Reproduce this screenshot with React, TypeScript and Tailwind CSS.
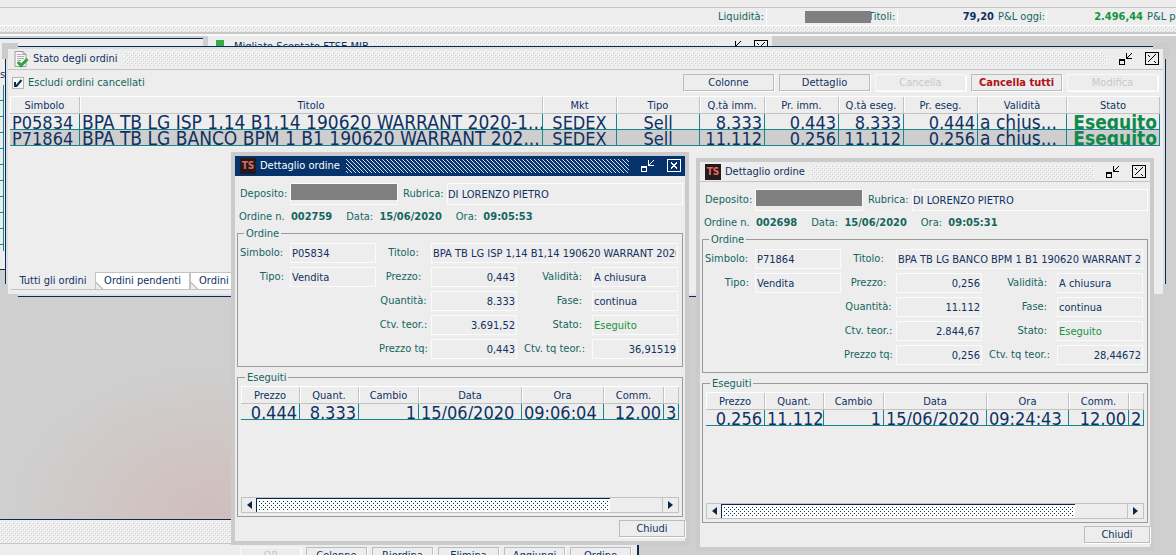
import React from "react";

const BUMPS =
  "[background-image:conic-gradient(at_1px_1px,transparent_75%,#ffffff_0),conic-gradient(at_1px_1px,transparent_75%,#ffffff_0),conic-gradient(at_1px_1px,transparent_75%,#cccccc_0),conic-gradient(at_1px_1px,transparent_75%,#cccccc_0)] [background-size:4px_4px] [background-position:0_0,2px_2px,1px_1px,3px_3px]";
const ACTIVE_BUMPS =
  "[background-image:conic-gradient(at_1px_1px,transparent_75%,#d4e2f0_0),conic-gradient(at_1px_1px,transparent_75%,#d4e2f0_0),conic-gradient(at_1px_1px,transparent_75%,#d4e2f0_0),conic-gradient(at_1px_1px,transparent_75%,#d4e2f0_0)] [background-size:4px_4px] [background-position:0_0,1px_1px,2px_2px,3px_3px]";
const THUMB_BUMPS =
  "[background-image:conic-gradient(at_1px_1px,transparent_75%,#12304f_0),conic-gradient(at_1px_1px,transparent_75%,#12304f_0)] [background-size:4px_4px] [background-position:1px_1px,3px_3px]";

function Bumps({ active = false }: { active?: boolean }) {
  return <div className={`h-3.5 min-w-0 flex-1 ${active ? ACTIVE_BUMPS : BUMPS}`} />;
}

function RestoreIcon() {
  return (
    <svg width="14" height="14" viewBox="0 0 14 14" shapeRendering="crispEdges" fill="none" stroke="currentColor">
      <path d="M0 7.5H6M5.5 8V13M0.5 8V13M0 12.5H6M1 8.5H5" />
      <path d="M7.500 1V6.500H13M8 5.500h1M9 4.500h1M10 3.500h1M11 2.500h1M12 1.500h1" />
    </svg>
  );
}

function CloseIcon({ active = false }: { active?: boolean }) {
  return (
    <svg width="14" height="14" viewBox="0 0 14 14" shapeRendering="crispEdges" fill="none" stroke="currentColor">
      <rect x="0.5" y="0.5" width="13" height="12" />
      {active ? (
        <path strokeWidth="2" d="M4 3.5l6 6M10 3.5l-6 6" />
      ) : (
        <path d="M3 9.5h1M4 8.5h1M5 7.5h1M6 6.5h1M7 5.5h1M8 4.5h1M9 3.5h1M10 2.5h1M3 3.5h1M4 4.5h1M9 9.5h1M10 10.500h1" />
      )}
    </svg>
  );
}

function WindowButtons({ active = false }: { active?: boolean }) {
  return (
    <div className={`flex items-center gap-3 pr-1 pl-2 ${active ? "text-white" : "text-black"}`}>
      <button type="button" aria-label="Riduci">
        <RestoreIcon />
      </button>
      <button type="button" aria-label="Chiudi finestra">
        <CloseIcon active={active} />
      </button>
    </div>
  );
}

function DocIcon() {
  return (
    <svg width="15" height="17" viewBox="0 0 15 17" fill="none">
      <path d="M1 0.5h8l3 3v12H1z" fill="#f7f7f7" stroke="#9a9a9a" />
      <path d="M9 0.5v3h3" stroke="#9a9a9a" />
      <path d="M3 3.5h5M3 5.5h7M3 7.5h7M3 9.5h4M3 11.5h3" stroke="#b0b0b0" />
      <path d="M4 11l3 3.5L13.5 8" stroke="#2fa43c" strokeWidth="3" />
    </svg>
  );
}

function PlainButton({ children, tone = "text-[#0f3163]", width = "w-[91px]" }: { children: string; tone?: string; width?: string }) {
  const faded = tone.includes("c8c8c8");
  return (
    <button
      type="button"
      disabled={faded}
      className={`h-[17px] shrink-0 border text-center leading-[15px] shadow-[1px_1px_0_#fff] ${faded ? "border-[#f8f8f8]" : "border-[#bcbcbc]"} ${tone} ${width}`}
    >
      {children}
    </button>
  );
}

const orderColumns: [string, string, string][] = [
  ["Simbolo", "w-[70px]", "text-[18px] text-left"],
  ["Titolo", "", "text-[19px] text-left"],
  ["Mkt", "w-[74px]", "text-[18px] text-center"],
  ["Tipo", "w-[83px]", "text-[18px] text-center"],
  ["Q.tà imm.", "w-[65px]", "text-[18px] text-right"],
  ["Pr. imm.", "w-[74px]", "text-[18px] text-right"],
  ["Q.tà eseg.", "w-[65px]", "text-[18px] text-right"],
  ["Pr. eseg.", "w-[74px]", "text-[18px] text-right"],
  ["Validità", "w-[89px]", "text-[19px] text-left"],
  ["Stato", "w-[93px]", "text-[19px] text-right font-bold text-[#108a4c]"],
];

const orderRows = [
  ["P05834", "BPA TB LG ISP 1,14 B1,14 190620 WARRANT 2020-1...", "SEDEX", "Sell", "8.333", "0,443", "8.333", "0,444", "a chius...", "Eseguito"],
  ["P71864", "BPA TB LG BANCO BPM 1 B1 190620 WARRANT 202...", "SEDEX", "Sell", "11.112", "0,256", "11.112", "0,256", "a chius...", "Eseguito"],
];

const fillColumns: [string, string, string][] = [
  ["Prezzo", "w-[59px]", "text-[18px] text-right"],
  ["Quant.", "w-[59px]", "text-[18px] text-right"],
  ["Cambio", "w-[60px]", "text-[18px] text-right"],
  ["Data", "w-[103px]", "text-[18px] text-left"],
  ["Ora", "w-[82px]", "text-[18px] text-left"],
  ["Comm.", "w-[60px]", "text-[18px] text-right"],
  ["", "", "text-[18px] text-left"],
];

function DataTable({ columns, rows }: { columns: [string, string, string][]; rows: string[][] }) {
  return (
    <table className="w-full table-fixed border-separate border-spacing-0 border-t border-white">
      <thead>
        <tr>
          {columns.map(([name, width], i) => (
            <th key={i} className={`h-[17px] border-r border-b border-[#c2c2c2] px-0 pt-0.5 pb-0 font-normal leading-[14px] shadow-[inset_1px_0_0_#fff] ${width}`}>
              {name}
            </th>
          ))}
        </tr>
      </thead>
      <tbody>
        {rows.map((row, r) => (
          <tr key={r} className={r === 1 ? "bg-[#cecece]" : ""}>
            {row.map((cell, c) => (
              <td key={c} className="border-r border-b border-[#17858c] p-0">
                <div className={`h-[15px] overflow-hidden px-0.5 leading-[17px] whitespace-nowrap ${columns[c][2]}`}>{cell}</div>
              </td>
            ))}
          </tr>
        ))}
      </tbody>
    </table>
  );
}

function Field({ id, value, align = "text-left", tone = "text-[#0f3163]" }: { id: string; value: string; align?: string; tone?: string }) {
  return (
    <input
      id={id}
      readOnly
      value={value}
      className={`h-5 w-full min-w-0 border border-[#fbfbfb] bg-transparent px-px outline-none ${align} ${tone}`}
    />
  );
}

interface Order {
  id: string;
  number: string;
  time: string;
  symbol: string;
  title: string;
  price: string;
  qty: string;
  amount: string;
  tq: string;
  fill: string[];
}

function Label({ htmlFor, children, className = "text-center" }: { htmlFor: string; children: string; className?: string }) {
  return (
    <label htmlFor={htmlFor} className={`whitespace-nowrap ${className}`}>
      {children}
    </label>
  );
}

function DetailWindow({ order, active = false, place }: { order: Order; active?: boolean; place: string }) {
  const k = order.id;
  return (
    <section className={`absolute w-[458px] border-4 border-[#cbcbcb] bg-[#ededed] ${place}`}>
      <header className={`flex h-5 items-center gap-1 pl-[5px] ${active ? "bg-[#06336b] text-white" : "border-b border-[#c4c4c4]"}`}>
        <span className="flex size-4 items-center justify-center overflow-hidden bg-[#241a1c] text-[10px] leading-none font-bold text-[#e06a64]">TS</span>
        <h2 className="mr-0.5">Dettaglio ordine</h2>
        <Bumps active={active} />
        <WindowButtons active={active} />
      </header>
      <div className="flex flex-col px-0.5 text-[#14665f]">
        <div className="mt-[7px] flex h-[22px] items-center pl-[3px]">
          <span className="w-[50px] whitespace-nowrap">Deposito:</span>
          <span className="h-[22px] w-[108px] border border-[#fbfbfb] bg-[#808080] bg-clip-content pb-1" />
          <Label htmlFor={`${k}-rubrica`} className="ml-[5px] w-[44px]">
            Rubrica:
          </Label>
          <input
            id={`${k}-rubrica`}
            readOnly
            value="DI LORENZO PIETRO"
            className="h-[22px] min-w-0 flex-1 border border-[#fbfbfb] bg-transparent text-[#0f3163] outline-none"
          />
        </div>
        <div className="mt-[5px] flex h-3.5 items-center gap-3.5 pl-0.5 whitespace-nowrap">
          <span>
            Ordine n.&nbsp; <b>{order.number}</b>
          </span>
          <span>
            Data:&nbsp; <b>15/06/2020</b>
          </span>
          <span>
            Ora:&nbsp; <b>{order.time}</b>
          </span>
        </div>
        <fieldset className="mt-[3px] min-w-0 border border-[#9a9a9a] px-0.5 pt-[3px] pb-[7px]">
          <legend className="ml-1 px-0.5 leading-[13px]">Ordine</legend>
          <div className="grid grid-cols-[50px_86px_55px_86px_75px_86px] items-center gap-y-1">
            <Label htmlFor={`${k}-simbolo`} className="text-left">
              Simbolo:
            </Label>
            <Field id={`${k}-simbolo`} value={order.symbol} />
            <Label htmlFor={`${k}-titolo`}>Titolo:</Label>
            <div className="col-span-3">
              <Field id={`${k}-titolo`} value={order.title} />
            </div>

            <Label htmlFor={`${k}-tipo`} className="pr-1.5 text-right">
              Tipo:
            </Label>
            <Field id={`${k}-tipo`} value="Vendita" />
            <Label htmlFor={`${k}-prezzo`}>Prezzo:</Label>
            <Field id={`${k}-prezzo`} value={order.price} align="text-right" />
            <Label htmlFor={`${k}-validita`} className="pr-2.5 text-right">
              Validità:
            </Label>
            <Field id={`${k}-validita`} value="A chiusura" />

            <Label htmlFor={`${k}-quantita`} className="col-start-3 text-center">
              Quantità:
            </Label>
            <Field id={`${k}-quantita`} value={order.qty} align="text-right" />
            <Label htmlFor={`${k}-fase`} className="pr-2.5 text-right">
              Fase:
            </Label>
            <Field id={`${k}-fase`} value="continua" />

            <Label htmlFor={`${k}-ctv`} className="col-start-3 text-center">
              Ctv. teor.:
            </Label>
            <Field id={`${k}-ctv`} value={order.amount} align="text-right" />
            <Label htmlFor={`${k}-stato`} className="pr-2.5 text-right">
              Stato:
            </Label>
            <Field id={`${k}-stato`} value="Eseguito" tone="text-[#17933f]" />

            <Label htmlFor={`${k}-ptq`} className="col-start-3 text-center">
              Prezzo tq:
            </Label>
            <Field id={`${k}-ptq`} value={order.price} align="text-right" />
            <Label htmlFor={`${k}-tq`}>Ctv. tq teor.:</Label>
            <Field id={`${k}-tq`} value={order.tq} align="text-right" />
          </div>
        </fieldset>
        <fieldset className="mt-1 min-w-0 border border-[#9a9a9a] px-[3px] pt-0.5 pb-[3px]">
          <legend className="ml-1 px-0.5 leading-[13px]">Eseguiti</legend>
          <div className="h-[111px] text-[#0f3163]">
            <DataTable columns={fillColumns} rows={[order.fill]} />
          </div>
          <div className="flex h-4 border border-[#c2c2c2] text-[#0b2748]">
            <button type="button" aria-label="Scorri a sinistra" className="flex w-3.5 items-center justify-center">
              <svg width="5" height="8" viewBox="0 0 5 8">
                <path d="M5 0v8L0 4z" fill="currentColor" />
              </svg>
            </button>
            <div className="flex min-w-0 flex-1 pr-[52px]">
              <div className="flex-1 border-t border-l border-[#0b2748] bg-white p-px">
                <div className={`h-full ${THUMB_BUMPS}`} />
              </div>
            </div>
            <button type="button" aria-label="Scorri a destra" className="flex w-4 items-center justify-center border-l border-[#c2c2c2]">
              <svg width="5" height="8" viewBox="0 0 5 8">
                <path d="M0 0v8l5-4z" fill="currentColor" />
              </svg>
            </button>
          </div>
        </fieldset>
      </div>
      <footer className="flex justify-end pt-[3px] pb-1">
        <PlainButton width="w-[66px]">Chiudi</PlainButton>
      </footer>
    </section>
  );
}

const orders: Order[] = [
  {
    id: "a",
    number: "002759",
    time: "09:05:53",
    symbol: "P05834",
    title: "BPA TB LG ISP 1,14 B1,14 190620 WARRANT 2020",
    price: "0,443",
    qty: "8.333",
    amount: "3.691,52",
    tq: "36,91519",
    fill: ["0,444", "8,333", "1", "15/06/2020", "09:06:04", "12,00", "3"],
  },
  {
    id: "b",
    number: "002698",
    time: "09:05:31",
    symbol: "P71864",
    title: "BPA TB LG BANCO BPM 1 B1 190620 WARRANT 20",
    price: "0,256",
    qty: "11.112",
    amount: "2.844,67",
    tq: "28,44672",
    fill: ["0,256", "11,112", "1", "15/06/2020", "09:24:43", "12,00", "2"],
  },
];

function StatusBar() {
  return (
    <header className="shrink-0 bg-[#ededed]">
      <div className="h-2 border-b border-[#c6c6c6]" />
      <div className="flex h-[18px] items-center justify-end gap-0.5 overflow-hidden border-b border-white text-[#14665f]">
        <span className="whitespace-nowrap">Liquidità:</span>
        <span className="relative h-full w-[100px] border-l border-white">
          <span className="absolute top-[3px] left-[38px] h-3 w-[66px] bg-[#808080]" />
        </span>
        <span className="w-[27px] text-right whitespace-nowrap">Titoli:</span>
        <b className="w-[99px] border-l border-white pr-0.5 text-right text-[#0f3163]">79,20</b>
        <span className="w-[46px] whitespace-nowrap">P&amp;L oggi:</span>
        <b className="w-[99px] border-l border-white pr-0.5 text-right text-[#17933f]">2.496,44</b>
        <span className="w-[29px] overflow-hidden whitespace-nowrap">P&amp;L per</span>
      </div>
      <div className={`h-1.5 ${BUMPS}`} />
      <div className="h-1 border-t-2 border-b-2 border-t-[#c9c9c9] border-b-[#f8f8f8]" />
    </header>
  );
}

function StateWindow() {
  return (
    <section className="absolute top-2.5 right-2.5 left-[5px] h-[251px] border border-[#0b2c50] bg-[#d9dfe4] p-0.5">
      <i className="absolute -top-1 -left-1 size-4 bg-[#cbcbcb]" />
      <i className="absolute -top-1 -right-1 size-4 bg-[#cbcbcb]" />
      <i className="absolute -bottom-1 -left-1 size-4 bg-[#cfcfcf]" />
      <i className="absolute -right-1 -bottom-1 size-4 bg-[#cfcfcf]" />
      <div className="relative flex h-full flex-col bg-[#ededed]">
        <header className="flex h-[21px] shrink-0 items-center gap-1 border-b border-[#c4c4c4] pl-1.5">
          <DocIcon />
          <h1 className="mr-0.5">Stato degli ordini</h1>
          <Bumps />
          <WindowButtons />
        </header>
        <div className="flex h-[25px] shrink-0 items-center gap-[5px] pr-[5px] pl-1">
          <label className="mr-auto flex items-center gap-1 text-[#14665f]">
            <span className="relative flex size-3">
              <input type="checkbox" defaultChecked className="peer size-3 appearance-none border border-[#b4b4b4] bg-[#f8f8f8]" />
              <svg className="pointer-events-none absolute top-0 left-0 hidden peer-checked:block" width="12" height="12" viewBox="0 0 12 12">
                <path d="M3 5v4h1.500L9.500 3" fill="none" stroke="#0b2c50" strokeWidth="2" />
              </svg>
            </span>
            Escludi ordini cancellati
          </label>
          <PlainButton>Colonne</PlainButton>
          <PlainButton>Dettaglio</PlainButton>
          <PlainButton tone="text-[#c8c8c8]">Cancella</PlainButton>
          <PlainButton tone="font-bold text-[#b01218]">Cancella tutti</PlainButton>
          <PlainButton tone="text-[#c8c8c8]">Modifica</PlainButton>
        </div>
        <div className="min-h-0 flex-1 pt-px pr-[3px] pl-0.5">
          <DataTable columns={orderColumns} rows={orderRows} />
        </div>
        <div role="tablist" className="mb-1 flex h-[18px] shrink-0 pl-[3px]">
          <button type="button" role="tab" aria-selected className="w-[84px] border-b border-[#c2c2c2] leading-[17px]">
            Tutti gli ordini
          </button>
          {["Ordini pendenti", "Ordini"].map((t, i) => (
            <button
              key={t}
              type="button"
              role="tab"
              aria-selected={false}
              className={`border border-[#c2c2c2] bg-white bg-[linear-gradient(45deg,#ededed_4px,#c2c2c2_4px,#c2c2c2_5px,transparent_5px)] leading-4 ${i === 0 ? "w-[95px]" : "w-[94px] pl-2 text-left"}`}
            >
              {t}
            </button>
          ))}
        </div>
      </div>
    </section>
  );
}

function LeftWindow() {
  return (
    <section className="absolute top-[2px] left-0 h-[232px] w-[203px] border-t border-b border-[#0b2c50] bg-[#ededed] pt-[26px]">
      <div className="h-5 w-1 text-right leading-5">s</div>
      <div className="h-[166px] w-1 border-r border-[#17858c] bg-[repeating-linear-gradient(#ededed_0_15px,#17858c_15px_16px)]" />
    </section>
  );
}

function BackWindow() {
  return (
    <section className="absolute top-0 left-52 h-10 w-[564px] bg-[#ededed]">
      <header className="flex h-[22px] items-center gap-1 pl-2">
        <span className="mt-1 size-2 self-start bg-[#35ac48]" />
        <span className="ml-1.5">Migliato Scontato FTSE MIB</span>
        <Bumps />
        <WindowButtons />
      </header>
    </section>
  );
}

function BottomWindow() {
  const names = ["Colonne", "Riordina", "Elimina", "Aggiungi", "Ordine"];
  return (
    <section className="absolute top-[483px] left-0 h-14 w-[639px] border-t border-r-2 border-[#0b2c50] bg-[#ededed] pt-0.5">
      <div className={`h-[21px] ${BUMPS}`} />
      <div className="flex justify-end gap-[5px] border-t border-[#c4c4c4] pt-[3px] pr-1.5">
        <PlainButton width="w-[61px]" tone="text-[#c8c8c8]">
          OP
        </PlainButton>
        {names.map((n) => (
          <PlainButton key={n} width="w-[61px]">
            {n}
          </PlainButton>
        ))}
      </div>
    </section>
  );
}

export default function App() {
  return (
    <div className="flex h-screen flex-col overflow-hidden bg-[#cfcfcf] font-['DejaVu_Sans_Condensed','DejaVu_Sans',sans-serif] text-[11px] leading-[14px] text-[#0f3163]">
      <StatusBar />
      <main className="relative min-h-0 flex-1 overflow-hidden bg-[radial-gradient(ellipse_200px_150px_at_210px_480px,#d0bebb,transparent)]">
        <LeftWindow />
        <BackWindow />
        <BottomWindow />
        <StateWindow />
        <DetailWindow order={orders[1]} place="top-[122px] left-[696px]" />
        <DetailWindow order={orders[0]} active place="top-[116px] left-[231px]" />
      </main>
    </div>
  );
}
